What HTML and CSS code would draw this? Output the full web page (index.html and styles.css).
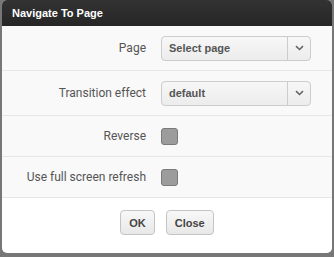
FILE: index.html
```html
<!DOCTYPE html>
<html>
<head>
	<title>Navigate To Page</title>
	<link rel="stylesheet" href="styles.css">
</head>
<body>
	<div class="dialog">
		<div class="header">Navigate To Page</div>
		<div class="content">
			<div class="row">
				<label class="label">Page</label>
				<div class="select"><span class="value">Select page</span><span class="arrow"><svg width="9" height="6" viewBox="0 0 9 6"><path d="M1 1.2 L4.5 4.5 L8 1.2" fill="none" stroke="#666" stroke-width="1.6"/></svg></span></div>
			</div>
			<div class="row">
				<label class="label">Transition effect</label>
				<div class="select"><span class="value">default</span><span class="arrow"><svg width="9" height="6" viewBox="0 0 9 6"><path d="M1 1.2 L4.5 4.5 L8 1.2" fill="none" stroke="#666" stroke-width="1.6"/></svg></span></div>
			</div>
			<div class="row short">
				<label class="label">Reverse</label>
				<div class="check"></div>
			</div>
			<div class="row short">
				<label class="label">Use full screen refresh</label>
				<div class="check"></div>
			</div>
		</div>
		<div class="footer">
			<button class="btn">OK</button>
			<button class="btn">Close</button>
		</div>
	</div>
</body>
</html>
```
FILE: styles.css
```css
html, body {
	margin: 0;
	padding: 0;
}
body {
	background-color: #777;
	font-family: Roboto, "Liberation Sans", sans-serif;
	height: 257px;
	overflow: hidden;
}
.dialog {
	margin: 0 2px;
	height: 253px;
	background-color: #fff;
	border-radius: 5px;
	overflow: hidden;
	display: flex;
	flex-direction: column;
}
.header {
	height: 26px;
	line-height: 27px;
	padding-left: 10px;
	background: linear-gradient(#333, #262626);
	color: #fff;
	font-family: "Liberation Sans", Arial, sans-serif;
	font-weight: bold;
	font-size: 11px;
}
.content {
	background-color: #f9f9f9;
}
.row {
	display: flex;
	align-items: center;
	height: 44px;
	border-bottom: 1px solid #e6e6e6;
}
.row.short {
	height: 40px;
}
.label {
	width: 144px;
	text-align: right;
	padding-right: 15px;
	font-size: 12px;
	color: #555;
}
.select {
	display: flex;
	width: 148px;
	height: 23px;
	border: 1px solid #ccc;
	border-radius: 4px;
	background: linear-gradient(#f7f7f7, #ececec);
	font-family: "Liberation Sans", Arial, sans-serif;
	font-weight: bold;
	font-size: 11px;
	color: #555;
}
.value {
	flex: 1;
	line-height: 23px;
	padding-left: 7px;
	border-right: 1px solid #ccc;
}
.arrow {
	width: 22px;
	display: flex;
	align-items: center;
	justify-content: center;
}
.check {
	width: 15px;
	height: 15px;
	border: 1px solid #7a7a7a;
	border-radius: 3px;
	background-color: #9c9c9c;
}
.footer {
	flex: 1;
	display: flex;
	justify-content: center;
	align-items: flex-start;
	gap: 11px;
	padding-top: 12px;
}
.btn {
	height: 25px;
	padding: 0 8px;
	border: 1px solid #c4c4c4;
	border-radius: 4px;
	background: linear-gradient(#f8f8f8, #e8e8e8);
	font-family: "Liberation Sans", Arial, sans-serif;
	font-weight: bold;
	font-size: 11px;
	color: #444;
}
```
